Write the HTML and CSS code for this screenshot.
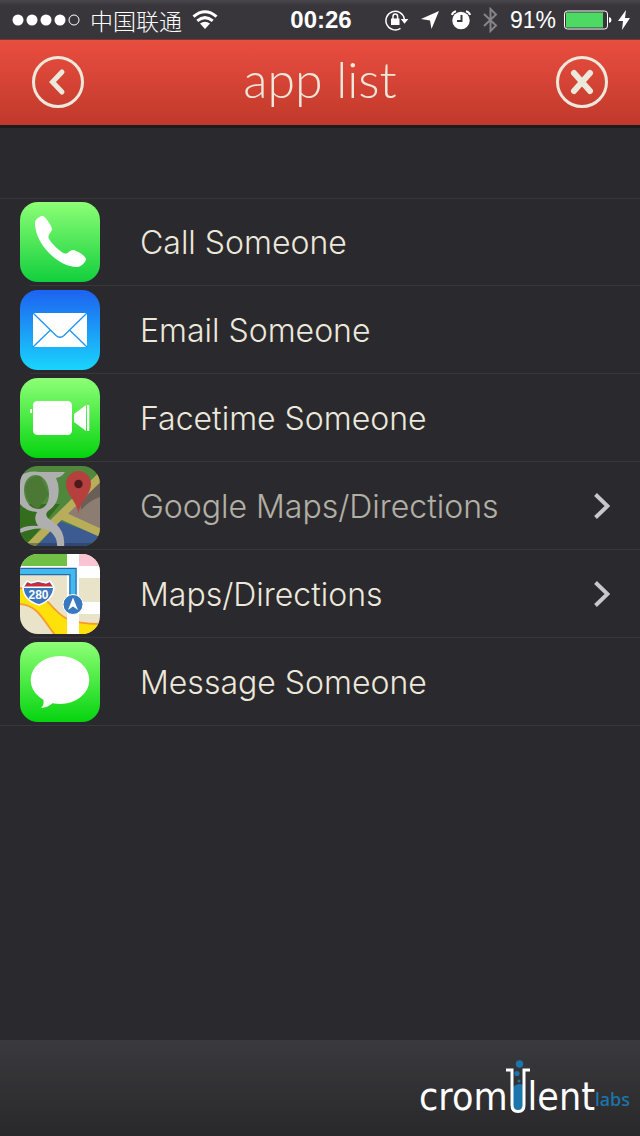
FILE: index.html
```
<!DOCTYPE html>
<html lang="en">

<head>
    <meta charset="UTF-8">
    <meta name="viewport" content="width=device-width, initial-scale=1.0">
    <title>App List</title>
    <link rel="stylesheet" href="styles.css">
</head>

<body>
    <div class="status-bar">
        <div class="status-left">
            <svg class="signal" width="68" height="12" viewBox="0 0 68 12">
                <circle cx="6" cy="6" r="5.5" />
                <circle cx="20" cy="6" r="5.5" />
                <circle cx="34" cy="6" r="5.5" />
                <circle cx="48" cy="6" r="5.5" />
                <circle class="line" cx="62" cy="6" r="5" />
            </svg>
            <span class="carrier">中国联通</span>
            <svg class="wifi" width="26" height="20" viewBox="0 0 26 20">
                <path class="line thick" d="M1.5 6.6Q13 -3.2 24.5 6.6M5.3 10.8Q13 4.4 20.7 10.8" />
                <path d="M8 13.6Q13 9.8 18 13.6L13 19Z" />
            </svg>
        </div>
        <span class="time">00:26</span>
        <div class="status-right">
            <svg width="24" height="22" viewBox="0 0 24 22">
                <path class="line" stroke-width="1.5" d="M15.5 19.3A9.3 9.3 0 1 1 19.4 10" />
                <path d="M15.8 10H23.4L19.5 14.8ZM6 9.5H14.5V16H6Z" />
                <path class="line" stroke-width="1.5" d="M8 10V7.2A2.3 2.3 0 0 1 12.6 7.2V10" />
            </svg>
            <svg width="20" height="20" viewBox="0 0 20 20">
                <path d="M19 1L11.5 19L10 10.5L1 9Z" />
            </svg>
            <svg width="20" height="20" viewBox="0 0 20 20">
                <circle cx="10" cy="10.5" r="8.7" />
                <path class="line" stroke-width="2" d="M1 5Q1.5 2 5 1.2M19 5Q18.5 2 15 1.2" />
                <path class="hands" d="M10.5 5V11H6" />
            </svg>
            <svg class="bluetooth" width="17" height="26" viewBox="0 0 17 26">
                <path d="M2 7L14 18.5L8.5 24V2L14 7.5L2 19" />
            </svg>
            <div class="battery">
                <span class="percent">91%</span>
                <svg width="50" height="20" viewBox="0 0 50 20">
                    <rect class="line" x="2.5" y="1" width="43" height="18" rx="3" />
                    <rect class="charge" x="4" y="2.5" width="37" height="15" />
                    <path d="M47 7Q49.5 7.5 49.5 10T47 13Z" />
                </svg>
                <svg width="12" height="20" viewBox="0 0 12 20">
                    <path d="M8 0L0 11H5L4 20L12 8H7Z" />
                </svg>
            </div>
        </div>
    </div>

    <header class="header">
        <button class="round-button" aria-label="Back">
            <svg width="52" height="52" viewBox="0 0 52 52">
                <circle cx="26" cy="26" r="24.5" />
                <path class="back" d="M30 16L20.5 26L30 36" />
            </svg>
        </button>
        <h1>app list</h1>
        <button class="round-button" aria-label="Close">
            <svg width="52" height="52" viewBox="0 0 52 52">
                <circle cx="26" cy="26" r="24.5" />
                <path class="close" d="M18 17L34 35M34 17L18 35" />
            </svg>
        </button>
    </header>

    <main>
        <ul class="app-list">
            <li>
                <a href="#call">
                    <svg class="app-icon" viewBox="0 0 80 80">
                        <defs>
                            <linearGradient id="callFill" x2="0" y2="1">
                                <stop offset="0" stop-color="#8cff75" />
                                <stop offset="1" stop-color="#12cf3d" />
                            </linearGradient>
                        </defs>
                        <rect width="80" height="80" fill="url(#callFill)" />
                        <path fill="#fff" d="M15 21C15 17 20 14 22.5 13.7C25 14 32 24 32 27C32 30 28 32 28.5 35.5C29 39 41 51 45 51.5C48 52 50 48 53 48C56 48 66 54 66 57C66 60 61 65 57 65C38 65 15 42 15 21Z" />
                    </svg>
                    <span>Call Someone</span>
                </a>
            </li>
            <li>
                <a href="#email">
                    <svg class="app-icon" viewBox="0 0 80 80">
                        <defs>
                            <linearGradient id="mailFill" x2="0" y2="1">
                                <stop offset="0" stop-color="#1d62f0" />
                                <stop offset="1" stop-color="#19d5fd" />
                            </linearGradient>
                        </defs>
                        <rect width="80" height="80" fill="url(#mailFill)" />
                        <rect x="13" y="23" width="54" height="34" fill="#fff" />
                        <path fill="none" stroke="#1c93f5" stroke-width="1.3" d="M13 23L36 45.5Q40 49 44 45.5L67 23M13 57L30.5 40M67 57L49.5 40" />
                    </svg>
                    <span>Email Someone</span>
                </a>
            </li>
            <li>
                <a href="#facetime">
                    <svg class="app-icon" viewBox="0 0 80 80">
                        <defs>
                            <linearGradient id="greenFill" x2="0" y2="1">
                                <stop offset="0" stop-color="#8eff77" />
                                <stop offset="1" stop-color="#05d40f" />
                            </linearGradient>
                        </defs>
                        <rect width="80" height="80" fill="url(#greenFill)" />
                        <rect x="13" y="23" width="39" height="34" rx="4.5" fill="#fff" />
                        <path fill="#fff" d="M12 31V35H11Q10 35 10 34V32Q10 31 11 31ZM54 36L66 27V53L54 44ZM67 27H69.3V53H67Z" />
                    </svg>
                    <span>Facetime Someone</span>
                </a>
            </li>
            <li class="unavailable">
                <a href="#google-maps">
                    <svg class="app-icon" viewBox="0 0 80 80">
                        <rect width="80" height="80" fill="#5fb045" />
                        <path fill="#388a17" d="M0 38H40L6 80H0Z" />
                        <path fill="#5b9a3b" d="M5 20Q10 9 20 10L29 28L18 43Q5 38 5 20Z" />
                        <path fill="#b7a08f" d="M44 48L80 17V64Z" />
                        <path fill="#85766a" d="M61 44Q59 34 67 26L80 16V31Q70 34 61 44Z" />
                        <path fill="#4571bc" d="M40 55L80 70V80H17Z" />
                        <path fill="none" stroke="#f5e66c" stroke-width="8" d="M8 82L40 50L82 9M41 49L81 67" />
                        <path fill="#1d2f52" fill-opacity=".4" d="M0 77H80V80H0Z" />
                        <path fill="#e8e8e8" fill-rule="evenodd" d="M0 10Q8 4 20 6H45Q42 11 36 12Q40 20 38 31Q36 40 28 45Q24 49 29 53Q38 58 42 66Q45 73 44 81H37Q38 72 30 65Q20 59 0 67V63Q7 59 18 60Q13 53 17 46Q5 45 0 38ZM16 9C8 9 4 16 4 24C4 34 10 43 18 43C26 43 29 36 29 28C29 18 24 9 16 9Z" />
                        <path fill="#f04a45" d="M58.5 49C58.5 37 46 29 46 18A12.5 13 0 0 1 71 18C71 29 58.5 37 58.5 49Z" />
                        <circle cx="58.5" cy="18" r="4.2" fill="#591416" />
                    </svg>
                    <span>Google Maps/Directions</span>
                    <svg class="arrow" viewBox="0 0 16 26">
                        <path d="M1.5 1.5L13.5 13L1.5 24.5" />
                    </svg>
                </a>
            </li>
            <li>
                <a href="#maps">
                    <svg class="app-icon" viewBox="0 0 80 80">
                        <rect width="80" height="80" fill="#e9e4c9" />
                        <path fill="#71bf44" d="M0 0H47V12H0Z" />
                        <path fill="#f9c5d2" d="M59 0H80V12H59Z" />
                        <path fill="#fff" d="M59 12H80V24H59ZM59 48H80V60H59ZM0 12H49V14H0Z" />
                        <path fill="#fee00b" stroke="#f79a2b" stroke-width="1.8" d="M-2 34Q14 35 29 49C42 64 48 70 82 70V82H36C24 69 19 50 -2 50Z" />
                        <path fill="#fff" d="M47 0H59V80H47Z" />
                        <path fill="none" stroke="#2169aa" stroke-width="7.5" d="M0 17.5H53V44" />
                        <path fill="none" stroke="#45b8ee" stroke-width="5" d="M0 17.5H53V44" />
                        <path fill="#3a77bd" stroke="#fff" stroke-width="1.6" d="M7 27L11 29L18 27L26 29L30 27L34 33Q33 46 19 51Q3 46 3 33Z" />
                        <path fill="#d72630" d="M7.5 28.5L11 30L18 28.5L26 30L29.5 28.5L32 32.5H5Z" />
                        <path fill="#fff" d="M4 32.5H33V34H4Z" />
                        <text class="route" x="18.5" y="44.5">280</text>
                        <circle cx="53" cy="50.5" r="10" fill="#3778bf" stroke="#fff" />
                        <path fill="#fff" d="M53 43.5L58 56L53 52.5L48 56Z" />
                    </svg>
                    <span>Maps/Directions</span>
                    <svg class="arrow" viewBox="0 0 16 26">
                        <path d="M1.5 1.5L13.5 13L1.5 24.5" />
                    </svg>
                </a>
            </li>
            <li>
                <a href="#message">
                    <svg class="app-icon" viewBox="0 0 80 80">
                        <rect width="80" height="80" fill="url(#greenFill)" />
                        <ellipse cx="40" cy="38" rx="29.3" ry="24" fill="#fff" />
                        <path fill="#fff" d="M23 56Q25 63 21 65.5Q27 66.5 34 60Z" />
                    </svg>
                    <span>Message Someone</span>
                </a>
            </li>
        </ul>
    </main>

    <footer class="footer">
        <div class="logo">
            <span>crom</span>
            <svg width="24" height="54" viewBox="0 0 24 54">
                <path class="liquid" d="M7 27Q12 22 17 25V46Q17 51 12 51T7 46Z" />
                <path class="glass" d="M0 10H6V45Q6 51.5 12 51.5T18 45V10H24" />
                <circle class="liquid" cx="13.5" cy="4" r="3.7" />
                <circle class="liquid" cx="11" cy="13.5" r="2.6" />
                <circle class="liquid" cx="13" cy="21" r="1.5" />
            </svg>
            <span>lent</span>
            <small>labs</small>
        </div>
    </footer>
</body>

</html>
```
FILE: styles.css
```
* {
    box-sizing: border-box;
}

body {
    display: flex;
    flex-direction: column;
    min-height: 100vh;
    margin: 0;
    background-color: #2a292d;
    color: #ece8db;
    font-family: "Liberation Sans", "Noto Sans CJK SC", sans-serif;
}

/* status bar */
.status-bar {
    display: grid;
    grid-template-columns: 1fr auto 1fr;
    align-items: center;
    height: 40px;
    padding: 0 10px 0 12px;
    background: linear-gradient(#48474c, #38363b 6px);
    border-bottom: 1px solid #70382f;
    color: #fff;
}

.status-bar svg {
    fill: #fff;
    flex-shrink: 0;
}

.status-bar .line {
    fill: none;
    stroke: #fff;
}

.status-bar .thick {
    stroke-width: 3;
}

.status-left,
.status-right {
    display: flex;
    align-items: center;
    gap: 11px;
}

.status-left {
    gap: 10px;
}

.status-right {
    justify-content: flex-end;
}

.battery {
    display: flex;
    align-items: center;
    gap: 6px;
}

.carrier {
    font-family: "Noto Sans CJK SC", sans-serif;
    font-size: 23px;
    font-weight: 300;
    line-height: 32px;
}

.time {
    font-size: 24px;
    font-weight: bold;
}

.percent {
    font-size: 23px;
    line-height: 24px;
}

.status-bar .hands {
    fill: none;
    stroke: #38363b;
    stroke-width: 2;
}

.status-bar .bluetooth {
    fill: none;
    stroke: #858487;
    stroke-width: 2;
}

.status-bar .charge {
    fill: #4cd964;
}

/* header */
.header {
    display: flex;
    align-items: center;
    justify-content: space-between;
    height: 88px;
    padding: 0 32px 1px;
    background: linear-gradient(#e94e3f, #c0392b);
    border-bottom: 3px solid #1c1b1d;
}

.header h1 {
    margin: 0 0 6px;
    font-family: Lato, sans-serif;
    font-size: 50px;
    font-weight: 300;
    line-height: 52px;
}

.round-button {
    display: flex;
    padding: 0;
    border: none;
    background: none;
    cursor: pointer;
}

.round-button svg {
    fill: none;
    stroke: #ece8db;
    stroke-width: 3;
    stroke-linecap: round;
}

.round-button .back {
    stroke-width: 5;
}

.round-button .close {
    stroke-width: 6;
}

/* list */
main {
    flex: 1;
    padding-top: 70px;
}

.app-list {
    margin: 0;
    padding: 0;
    list-style: none;
    background: linear-gradient(#37363b, #37363b) top / 100% 1px no-repeat;
}

.app-list li {
    background: linear-gradient(#37363b, #37363b) 30px bottom / 100% 1px no-repeat;
}

.app-list li:last-child {
    background-position: 0 bottom;
}

.app-list a {
    display: flex;
    align-items: center;
    gap: 40px;
    height: 88px;
    padding: 0 30px 0 20px;
    color: #ece8db;
    font-family: Inter, sans-serif;
    font-size: 32px;
    font-weight: 300;
    text-decoration: none;
}

.app-icon {
    width: 80px;
    height: 80px;
    border-radius: 18px;
    flex-shrink: 0;
}

.route {
    fill: #fff;
    font-family: "Liberation Sans", sans-serif;
    font-size: 12px;
    font-weight: bold;
    text-anchor: middle;
}

.unavailable .app-icon,
.unavailable span {
    opacity: 0.7;
}

.arrow {
    width: 16px;
    height: 26px;
    margin-left: auto;
    fill: none;
    stroke: #c7c7cc;
    stroke-width: 4;
}

/* footer */
.footer {
    display: flex;
    align-items: center;
    justify-content: flex-end;
    height: 96px;
    padding: 8px 10px 0;
    background: linear-gradient(#3a393d, #29282b);
}

.logo {
    display: flex;
    align-items: flex-end;
    color: #fff;
    font-family: "DejaVu Sans Condensed", "DejaVu Sans", sans-serif;
    font-size: 39px;
    line-height: 56px;
}

.logo svg {
    margin: 0 -2px 11px;
}

.logo small {
    color: #1a76ad;
    font-family: "Noto Sans", sans-serif;
    font-size: 18px;
    font-weight: 500;
    line-height: 52px;
}

.liquid {
    fill: #1a76ad;
}

.glass {
    fill: none;
    stroke: #fff;
    stroke-width: 3;
}
```
